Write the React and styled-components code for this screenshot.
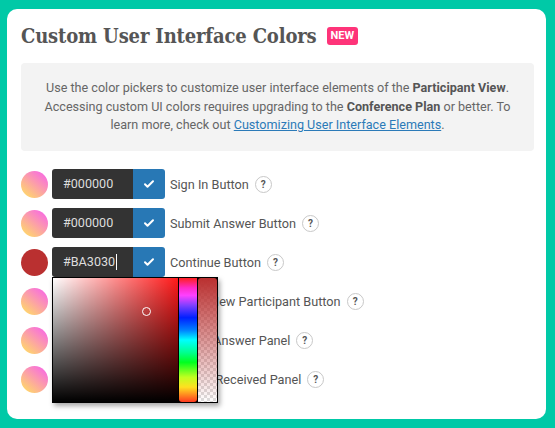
import React from "react"
import styled, { createGlobalStyle } from "styled-components"

const GlobalStyle = createGlobalStyle`
  html, body {
    margin: 0;
    padding: 0;
    background: #00c9a7;
  }
  body {
    font-family: Roboto, "Noto Sans", sans-serif;
  }
`

const Page = styled.div`
  width: 555px;
  height: 428px;
  padding: 9px 9px 9px 7px;
  box-sizing: border-box;
`

const Card = styled.div`
  position: relative;
  height: 410px;
  background: #fff;
  border-radius: 10px;
  padding: 14px 13px 0 13px;
  box-sizing: border-box;
`

const TitleRow = styled.div`
  display: flex;
  align-items: center;
  gap: 10px;
  margin-left: 1px;
  height: 26px;
`

const Title = styled.h1`
  margin: 0;
  font-family: "DejaVu Serif", serif;
  font-stretch: condensed;
  font-weight: 700;
  font-size: 20px;
  letter-spacing: -0.15px;
  color: #555;
`

const Badge = styled.span`
  background: #fe3479;
  color: #fff;
  font-family: Roboto, sans-serif;
  font-weight: 700;
  font-size: 11px;
  line-height: 18px;
  padding: 0 4px;
  border-radius: 3px;
`

const Notice = styled.div`
  margin: 14px 0 0 1px;
  width: 513px;
  height: 88px;
  box-sizing: border-box;
  background: #f3f3f3;
  border-radius: 4px;
  padding: 16px 14px 0;
  text-align: center;
  font-size: 12.6px;
  line-height: 18.5px;
  color: #666;

  b {
    font-weight: 700;
    color: #555;
  }
  a {
    color: #2b7ab8;
    text-decoration: underline;
  }
`

const List = styled.div`
  margin-top: 18px;
  display: flex;
  flex-direction: column;
  gap: 9px;
`

const Row = styled.div`
  position: relative;
  display: flex;
  align-items: center;
  height: 30px;
  margin-left: 1px;
`

const Swatch = styled.div`
  width: 27px;
  height: 27px;
  border-radius: 50%;
  background: ${(props) =>
    props.color ? props.color : "linear-gradient(40deg, #ffd86a 10%, #f86ae2 90%)"};
  margin-right: 4px;
  flex-shrink: 0;
`

const Field = styled.div`
  display: flex;
  height: 30px;
  border-radius: 3px;
  overflow: hidden;
  flex-shrink: 0;
`

const HexInput = styled.div`
  width: 81px;
  background: #333;
  color: #ddd;
  font-size: 12.6px;
  line-height: 30px;
  padding-left: 11px;
  box-sizing: border-box;
  display: flex;
  align-items: center;
`

const Caret = styled.span`
  display: inline-block;
  width: 1px;
  height: 16px;
  background: #fff;
  margin-left: 1px;
`

const ApplyButton = styled.div`
  width: 32px;
  background: #2878b5;
  display: flex;
  align-items: center;
  justify-content: center;
`

const Label = styled.span`
  margin-left: 5px;
  font-size: 12.7px;
  color: #555;
  white-space: nowrap;
`

const Help = styled.span`
  margin-left: 6px;
  width: 17px;
  height: 17px;
  border: 1px solid #c8c8c8;
  border-radius: 50%;
  box-sizing: border-box;
  display: inline-flex;
  align-items: center;
  justify-content: center;
  font-size: 10px;
  font-weight: 700;
  color: #555;
  flex-shrink: 0;
`

const Picker = styled.div`
  position: absolute;
  left: 31px;
  top: 30px;
  z-index: 5;
  display: flex;
  width: 166px;
  height: 126px;
  box-sizing: border-box;
  border: 1px solid #000;
  background: #000;
  gap: 1px;
  box-shadow: 2px 3px 5px rgba(0, 0, 0, 0.35);
`

const Saturation = styled.div`
  position: relative;
  width: 125px;
  background:
    linear-gradient(to top, #000, rgba(0, 0, 0, 0)),
    linear-gradient(to right, #fff, rgba(255, 255, 255, 0)),
    #ff1a1a;
`

const Pointer = styled.div`
  position: absolute;
  left: 89px;
  top: 29px;
  width: 7px;
  height: 7px;
  border: 1px solid #fff;
  border-radius: 50%;
`

const HueBar = styled.div`
  width: 18px;
  border-radius: 0 0 3px 3px;
  background: linear-gradient(
    to bottom,
    #ff2020 0%,
    #ff2ac8 8%,
    #ff40ff 14%,
    #8040ff 22%,
    #0020ff 32%,
    #0080ff 42%,
    #00ffff 50%,
    #00ff90 60%,
    #00ff20 68%,
    #c0ff20 80%,
    #ffe020 88%,
    #ff3a20 100%
  );
`

const AlphaBar = styled.div`
  width: 19px;
  border-radius: 3px 3px 0 0;
  background:
    linear-gradient(to bottom, rgba(186, 48, 48, 1), rgba(186, 48, 48, 0)),
    repeating-conic-gradient(#ddd 0% 25%, #fff 0% 50%) 0 0 / 6px 6px;
`

const Check = () => (
  <svg width="12" height="12" viewBox="0 0 24 24">
    <path d="M4 12.5l5 5L20 6.5" fill="none" stroke="#fff" strokeWidth="4" strokeLinecap="round" strokeLinejoin="round" />
  </svg>
)

const rows = [
  { hex: "#000000", label: "Sign In Button" },
  { hex: "#000000", label: "Submit Answer Button" },
  { hex: "#BA3030", label: "Continue Button", color: "#ba3030", open: true },
  { hex: "#000000", label: "Create New Participant Button" },
  { hex: "#000000", label: "Submit Answer Panel" },
  { hex: "#000000", label: "Answer Received Panel" },
]

const App = () => {
  return (
    <Page>
      <GlobalStyle />
      <Card>
        <TitleRow>
          <Title>Custom User Interface Colors</Title>
          <Badge>NEW</Badge>
        </TitleRow>
        <Notice>
          Use the color pickers to customize user interface elements of the <b>Participant View</b>.
          Accessing custom UI colors requires upgrading to the <b>Conference Plan</b> or better. To
          learn more, check out <a href="#">Customizing User Interface Elements</a>.
        </Notice>
        <List>
          {rows.map((row) => (
            <Row key={row.label}>
              <Swatch color={row.color} />
              <Field>
                <HexInput>
                  {row.hex}
                  {row.open && <Caret />}
                </HexInput>
                <ApplyButton>
                  <Check />
                </ApplyButton>
              </Field>
              <Label>{row.label}</Label>
              <Help>?</Help>
              {row.open && (
                <Picker>
                  <Saturation>
                    <Pointer />
                  </Saturation>
                  <HueBar />
                  <AlphaBar />
                </Picker>
              )}
            </Row>
          ))}
        </List>
      </Card>
    </Page>
  )
}

export default App
